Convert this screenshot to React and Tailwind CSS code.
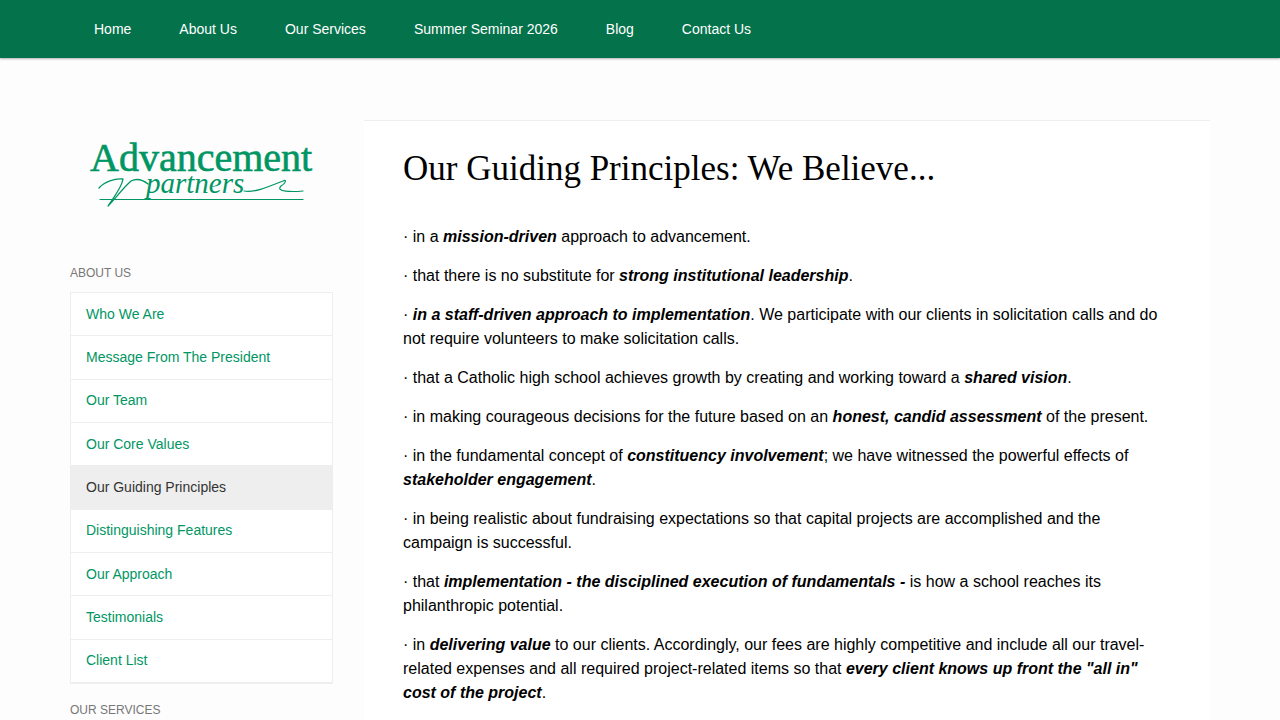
import React from "react";

const navItems = ["Home", "About Us", "Our Services", "Summer Seminar 2026", "Blog", "Contact Us"];

const aboutLinks = [
  "Who We Are",
  "Message From The President",
  "Our Team",
  "Our Core Values",
  "Our Guiding Principles",
  "Distinguishing Features",
  "Our Approach",
  "Testimonials",
  "Client List",
];

function Navbar() {
  return (
    <header className="bg-[#04724b] shadow-[0_1px_2px_rgba(0,0,0,0.3)]">
      <nav className="mx-auto flex h-[58px] max-w-[1140px] items-center gap-12 px-6 text-sm text-white">
        {navItems.map((item) => (
          <a key={item} href="#" className="hover:underline">
            {item}
          </a>
        ))}
      </nav>
    </header>
  );
}

function Logo() {
  return (
    <a href="#" aria-label="Advancement Partners home" className="block">
      <svg viewBox="0 0 263 104" className="w-full" fill="#009663">
        <text x="20" y="51" fontSize="40" fontFamily="'Liberation Serif', serif" stroke="#009663" strokeWidth="0.6">
          Advancement
        </text>
        <text x="76" y="73" fontSize="29" fontStyle="italic" fontFamily="'Liberation Serif', serif">
          partners
        </text>
        {/* pen flourishes and rule */}
        <g fill="none" stroke="#009663" strokeLinecap="round" strokeLinejoin="round">
          <path d="M29 68 C34 62 45 58 53 59 C52 67 44 77 38 86 C45 79 53 68 61 61 C67 58 73 60 78 64" strokeWidth="1.3" />
          <path d="M174 71 C184 73 198 67 213 61 C217 59 216 63 211 66 C205 72 222 72 233 71" strokeWidth="1.2" />
          <path d="M30 79.5 H233" strokeWidth="1.2" />
        </g>
      </svg>
    </a>
  );
}

function Sidebar() {
  return (
    <aside className="w-[263px] shrink-0 text-sm">
      <Logo />
      <h2 className="mt-[41px] text-xs leading-4 text-[#777]">ABOUT US</h2>
      <ul className="mt-[11px] flex min-h-[392px] flex-col border border-b-2 border-[#eee] bg-white">
        {aboutLinks.map((link) => (
          <li key={link} className="flex flex-1 border-b border-[#eee] last:border-b-0">
            <a
              href="#"
              className={
                link === "Our Guiding Principles"
                  ? "flex flex-1 items-center bg-[#eee] px-[15px] pb-px text-[#333]"
                  : "flex flex-1 items-center px-[15px] pb-px text-[#009663]"
              }
            >
              {link}
            </a>
          </li>
        ))}
      </ul>
      <h2 className="mt-[18px] text-xs leading-4 text-[#777]">OUR SERVICES</h2>
    </aside>
  );
}

function B({ children }) {
  return <strong className="font-bold italic">{children}</strong>;
}

function App() {
  return (
    <div className="min-h-screen bg-[#fdfdfd] font-['Liberation_Sans',Arial,sans-serif] text-black">
      <Navbar />
      <div className="mx-auto flex max-w-[1140px] items-start gap-[31px] pt-[62px]">
        <Sidebar />
        <main className="min-w-0 flex-1 border-t border-[#eee] bg-white pt-6 pr-10 pb-10 pl-[39px]">
          <h1 className="font-['Liberation_Serif',serif] text-[35px] leading-[48px]">
            Our Guiding Principles: We Believe...
          </h1>
          <div className="mt-8 flex flex-col gap-[15px] text-base leading-6">
            <p>
              · in a <B>mission-driven</B> approach to advancement.
            </p>
            <p>
              · that there is no substitute for <B>strong institutional leadership</B>.
            </p>
            <p>
              · <B>in a staff-driven approach to implementation</B>. We participate with our clients in
              solicitation calls and do not require volunteers to make solicitation calls.
            </p>
            <p>
              · that a Catholic high school achieves growth by creating and working toward a{" "}
              <B>shared vision</B>.
            </p>
            <p>
              · in making courageous decisions for the future based on an{" "}
              <B>honest, candid assessment</B> of the present.
            </p>
            <p>
              · in the fundamental concept of <B>constituency involvement</B>; we have witnessed the
              powerful effects of <B>stakeholder engagement</B>.
            </p>
            <p>
              · in being realistic about fundraising expectations so that capital projects are
              accomplished and the campaign is successful.
            </p>
            <p>
              · that <B>implementation - the disciplined execution of fundamentals -</B> is how a school
              reaches its philanthropic potential.
            </p>
            <p>
              · in <B>delivering value</B> to our clients. Accordingly, our fees are highly competitive
              and include all our travel-related expenses and all required project-related items so that{" "}
              <B>every client knows up front the "all in" cost of the project</B>.
            </p>
          </div>
        </main>
      </div>
    </div>
  );
}

export default App;
